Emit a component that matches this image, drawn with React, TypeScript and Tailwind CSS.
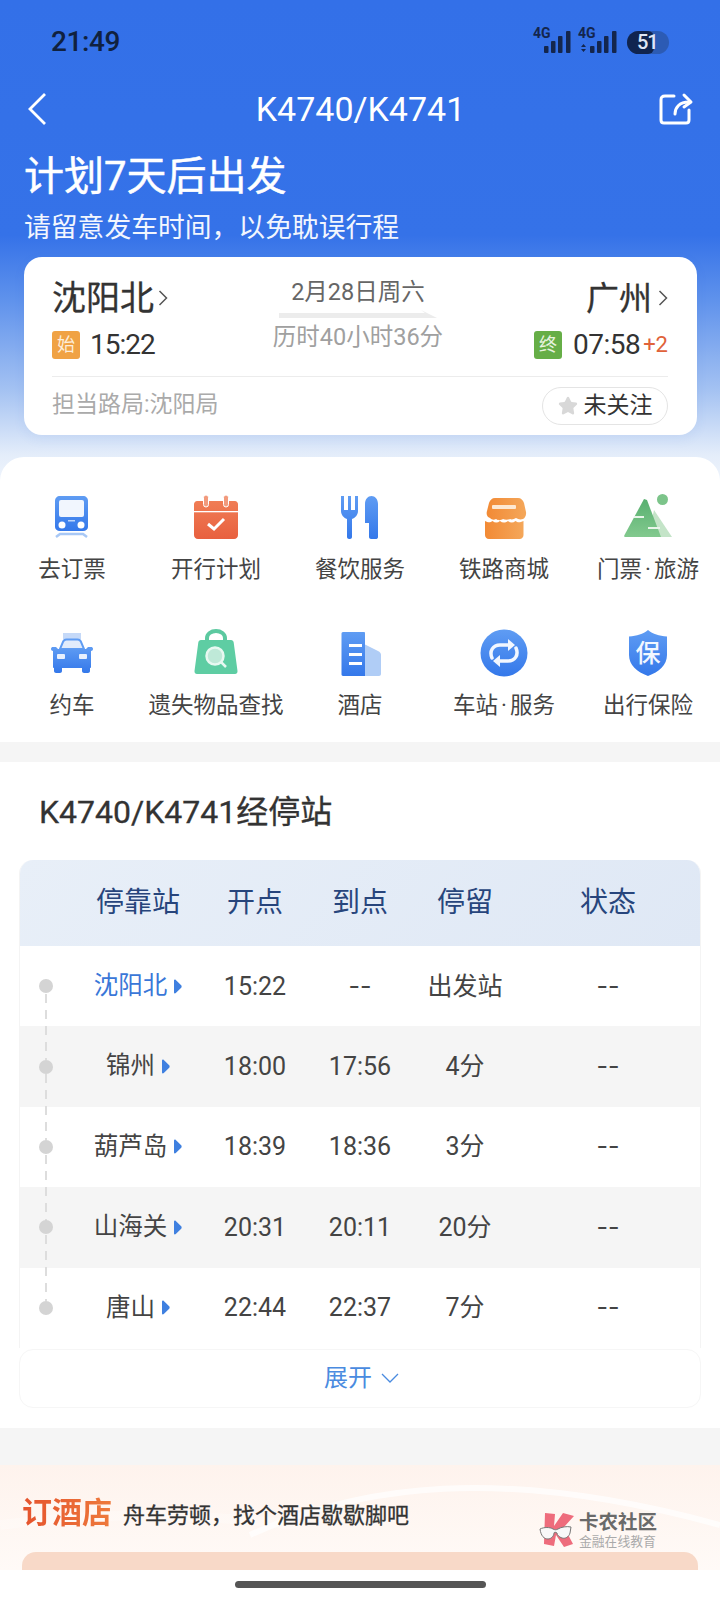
import { Star } from "lucide-react";

type Stop = { name: string; dep: string; arr: string; stay: string; active?: boolean };

const stops: Stop[] = [
  { name: "沈阳北", dep: "15:22", arr: "--", stay: "出发站", active: true },
  { name: "锦州", dep: "18:00", arr: "17:56", stay: "4分" },
  { name: "葫芦岛", dep: "18:39", arr: "18:36", stay: "3分" },
  { name: "山海关", dep: "20:31", arr: "20:11", stay: "20分" },
  { name: "唐山", dep: "22:44", arr: "22:37", stay: "7分" },
];

function Defs() {
  return (
    <svg width="0" height="0" className="absolute">
      <defs>
        <linearGradient id="blueG" x1="0" y1="0" x2="0" y2="1">
          <stop offset="0" stopColor="#5f9cf3" />
          <stop offset="1" stopColor="#3478ea" />
        </linearGradient>
        <linearGradient id="redG" x1="0" y1="0" x2="0" y2="1">
          <stop offset="0" stopColor="#f07d55" />
          <stop offset="1" stopColor="#e8603f" />
        </linearGradient>
        <linearGradient id="orangeG" x1="0" y1="0" x2="1" y2="0">
          <stop offset="0" stopColor="#f28a35" />
          <stop offset="1" stopColor="#f4a75a" />
        </linearGradient>
        <linearGradient id="greenG" x1="0" y1="0" x2="0" y2="1">
          <stop offset="0" stopColor="#58b070" />
          <stop offset="1" stopColor="#82c98e" />
        </linearGradient>
      </defs>
    </svg>
  );
}

function TrainIcon() {
  return (
    <svg width="48" height="48" viewBox="0 0 48 48">
      <path d="M12 3h23c3 0 5 2 5 5v26c0 2-2 4-5 4H12c-3 0-5-2-5-4V8c0-3 2-5 5-5z" fill="url(#blueG)" />
      <rect x="11" y="7" width="25" height="17" rx="2" fill="#f1f6fe" />
      <circle cx="14" cy="32" r="3.500" fill="#fff" />
      <circle cx="33" cy="32" r="3.500" fill="#fff" />
      <rect x="20" y="27" width="7" height="1.500" fill="#bcd4f9" />
      <path d="M8 44l4-3h23l4 3" fill="none" stroke="#a8c8f6" strokeWidth="2.500" />
    </svg>
  );
}

function CalendarIcon() {
  return (
    <svg width="48" height="48" viewBox="0 0 48 48">
      <path d="M5 8h38c1.500 0 3 1.500 3 3v31c0 2-1.500 4-4 4H6c-2.500 0-4-2-4-4V11c0-1.500 1.500-3 3-3z" fill="url(#redG)" />
      <rect x="2" y="18" width="44" height="1.300" fill="#fff" />
      <rect x="11.500" y="2" width="5" height="12" rx="2.500" fill="#f29a7c" stroke="#fff" strokeWidth="1" />
      <rect x="31.500" y="2" width="5" height="12" rx="2.500" fill="#f29a7c" stroke="#fff" strokeWidth="1" />
      <path d="M16 31l6 5 10-10" fill="none" stroke="#fff" strokeWidth="3" />
    </svg>
  );
}

function FoodIcon() {
  return (
    <svg width="48" height="48" viewBox="0 0 48 48">
      <path d="M5 3h3v14h4V3h3v14h4V3h3v15c0 4-3 7-6 8v18c0 1-1 2-2 2h-1c-1 0-2-1-2-2V26c-3-1-6-4-6-8z" fill="url(#blueG)" />
      <path d="M29 11c0-5 3-8 6.500-8S42 6 42 11v33c0 1.500-1 2-2.500 2H35c-1 0-2-1-2-2V30h-4z" fill="url(#blueG)" />
    </svg>
  );
}

function StoreIcon() {
  return (
    <svg width="48" height="48" viewBox="0 0 48 48">
      <path d="M10 5h28c3 0 5 2 6 5l2 9c.500 3-1 6-3 7-3 1-5 0-7-1-2 1-4 2-6 1-2 1-5 1-7 0-2 1-4 2-7 0-2 1-4 1-6-1-3-1-4-4-3-7l2-8c1-3 3-5 6-5z" fill="url(#orangeG)" />
      <path d="M5 28c3 1.500 5 2 7.500 0 2.500 2 5 2 7.500 0 2.500 2 5 2 8 0 2.500 2 5 2 7.500 0 2.500 2 4.500 1.500 8 0v14c0 2-1.500 4-4 4H9c-2.500 0-4-2-4-4z" fill="url(#orangeG)" />
      <rect x="12" y="12" width="24" height="4" rx="1" fill="#fde8d2" />
    </svg>
  );
}

function MountainIcon() {
  return (
    <svg width="48" height="48" viewBox="0 0 48 48">
      <circle cx="38.500" cy="6.500" r="5.500" fill="#7cc48a" />
      <path d="M30 17l18 27H24z" fill="#c4e4c8" />
      <path d="M20 6l3 1 14 37H1c-1 0-1-1-.500-2z" fill="url(#greenG)" />
      <rect x="10" y="23" width="10" height="2" fill="#e8f5ea" />
      <rect x="24" y="34" width="12" height="2" fill="#e8f5ea" />
    </svg>
  );
}

function CarIcon() {
  return (
    <svg width="48" height="48" viewBox="0 0 48 48">
      <rect x="15" y="4" width="18" height="6" fill="#c5d9f8" />
      <path d="M12 20l3-7c.500-1.500 2-2.500 3.500-2.500h11c1.500 0 3 1 3.500 2.500l3 7z" fill="#e1ebfb" stroke="#5f9cf3" strokeWidth="2" />
      <path d="M3 20c0-1.500 1-2 2-2h3l2 2h28l2-2h3c1 0 2 .500 2 2 0 1-1 2-2 2v16c0 1-1 1-1 1v3c0 1-1 2-2 2h-4c-1 0-2-1-2-2v-3H14v3c0 1-1 2-2 2H8c-1 0-2-1-2-2v-3s-1 0-1-1V22c-1 0-2-1-2-2z" fill="url(#blueG)" />
      <rect x="9" y="25" width="8" height="5" rx="1" fill="#e8f0fd" />
      <rect x="31" y="25" width="8" height="5" rx="1" fill="#e8f0fd" />
    </svg>
  );
}

function BagIcon() {
  return (
    <svg width="48" height="48" viewBox="0 0 48 48">
      <path d="M15 13V9c0-4 4-7 9-7s9 3 9 7v4" fill="none" stroke="#5cc9a0" strokeWidth="4" />
      <path d="M9 11h30c1.500 0 2.500 1 2.700 2.500L45.500 42c.200 2-1 3-2.500 3H5c-1.500 0-2.700-1-2.500-3l3.800-28.500C6.500 12 7.500 11 9 11z" fill="#5ecda3" />
      <circle cx="23" cy="27" r="8.500" fill="#bfe9d8" stroke="#e8f8f1" strokeWidth="2.500" />
      <path d="M29 33l5 5" stroke="#e8f8f1" strokeWidth="2.500" />
    </svg>
  );
}

function HotelIcon() {
  return (
    <svg width="48" height="48" viewBox="0 0 48 48">
      <path d="M28 15l14 7c2 1 3 2 3 4v19c0 1-1 2-2 2H28z" fill="#b0cdf6" />
      <path d="M7 3h21c.500 0 1 .500 1 1v43H7c-1 0-1.500-1-1.500-1.500V4.500C5.500 4 6 3 7 3z" fill="url(#blueG)" />
      <rect x="13" y="15" width="13" height="3" fill="#fff" />
      <rect x="13" y="24" width="13" height="3" fill="#fff" />
      <rect x="13" y="33" width="13" height="3" fill="#fff" />
    </svg>
  );
}

function LoopIcon() {
  return (
    <svg width="48" height="48" viewBox="0 0 48 48">
      <circle cx="24" cy="24" r="23.500" fill="url(#blueG)" />
      <path d="M12 29c-3-7 1-13 8-13h10" fill="none" stroke="#f2f7ff" strokeWidth="3.500" strokeLinecap="round" />
      <path d="M28 10l7 6-7 6z" fill="#f2f7ff" />
      <path d="M36 19c3 7-1 13-8 13H18" fill="none" stroke="#f2f7ff" strokeWidth="3.500" strokeLinecap="round" />
      <path d="M20 26l-7 6 7 6z" fill="#f2f7ff" />
    </svg>
  );
}

function ShieldIcon() {
  return (
    <div className="relative flex h-[48px] w-[48px] items-center justify-center">
      <svg width="48" height="48" viewBox="0 0 48 48" className="absolute inset-0">
        <path d="M24 1c5 4 11 6 19 6.500V26c0 10-8 17-19 21C13 43 5 36 5 26V7.500C13 7 19 5 24 1z" fill="url(#blueG)" />
      </svg>
      <span className="relative text-[25px] font-medium leading-none text-[#f2f7ff]">保</span>
    </div>
  );
}

const services = [
  { label: "去订票", icon: <TrainIcon /> },
  { label: "开行计划", icon: <CalendarIcon /> },
  { label: "餐饮服务", icon: <FoodIcon /> },
  { label: "铁路商城", icon: <StoreIcon /> },
  { label: "门票·旅游", icon: <MountainIcon /> },
  { label: "约车", icon: <CarIcon /> },
  { label: "遗失物品查找", icon: <BagIcon /> },
  { label: "酒店", icon: <HotelIcon /> },
  { label: "车站·服务", icon: <LoopIcon /> },
  { label: "出行保险", icon: <ShieldIcon /> },
];

function Signal({ second }: { second?: boolean }) {
  const left = second ? 1 : 0;
  return (
    <div className="relative h-[24px] w-[40px]">
      <span className="absolute left-0 top-[-4px] text-[14px] font-bold leading-[14px] text-[#14264d]">4G</span>
      <svg width="40" height="24" viewBox="0 0 40 24" className="absolute inset-0">
        {second && <path d="M3 17l2.500-3 2.500 3zM3 19l2.500 3 2.500-3z" fill="#14264d" />}
        <rect x={11 + left} y="16" width="4.500" height="7" rx="1" fill="#14264d" />
        <rect x={18 + left} y="11" width="4.500" height="12" rx="1" fill="#14264d" />
        <rect x={25 + left} y="6" width="4.500" height="17" rx="1" fill="#14264d" />
        <rect x={33 + left} y="1" width="4.500" height="22" rx="1" fill="#14264d" />
      </svg>
    </div>
  );
}

function StationArrow() {
  return (
    <svg width="9" height="15" viewBox="0 0 9 15">
      <path d="M1 1.500c0-1 1-1.200 1.800-.600l5.400 5.300c.600.700.600 1.900 0 2.600l-5.400 5.300c-.800.600-1.800.400-1.800-.600z" fill="#3f80e0" />
    </svg>
  );
}

function SmallChevron() {
  return (
    <svg width="10" height="18" viewBox="0 0 10 18" fill="none" stroke="#555555" strokeWidth="1.500">
      <path d="M1.500 2l7 7-7 7" />
    </svg>
  );
}

function KLogo() {
  return (
    <svg width="37" height="36" viewBox="0 0 37 36">
      <path d="M6 1l10 1-1 12L24 1l11 3-10 11 9 17-9 3-8-12-2 11-10-2z" fill="#ee6c7c" />
      <path d="M1 17c4-2 10-2 13 0 2 1 3 1 5 0 3-2 9-3 13-2l-1 6c-1 4-5 6-8 5-3-1-5-3-5-5-1-1-3-1-3 0 0 3-3 6-6 6-4 0-7-3-8-10z" fill="#f8f8f8" stroke="#777777" strokeWidth="1" />
    </svg>
  );
}

export default function App() {
  return (
    <div className="relative h-[1600px] w-[720px] overflow-hidden bg-white font-['Roboto','Noto_Sans_CJK_SC',sans-serif]">
      <Defs />
      <div className="bg-[linear-gradient(180deg,#3370e8_0px,#3572e8_235px,#5f92ec_300px,#a4c2f2_390px,#e4edfa_455px,#ffffff_520px)]">
        {/* status bar */}
        <div className="flex h-[84px] items-center justify-between pl-[51px] pr-[51px]">
          <span className="text-[28px] font-medium tracking-[-0.4px] text-[#10213f]">21:49</span>
          <div className="flex items-center gap-[9px]">
            <div className="flex items-center gap-[5px]">
              <Signal />
              <Signal second />
            </div>
            <div className="relative h-[23px] w-[42px] overflow-hidden rounded-full bg-[#2c5bb4]">
              <div className="h-full w-[27px] rounded-[6px] bg-[#10244f]" />
              <span className="absolute left-[10px] top-0 text-[20px] font-medium leading-[23px] tracking-[-1px] text-[#dfe7f5]">51</span>
            </div>
          </div>
        </div>

        {/* nav */}
        <div className="grid h-[50px] grid-cols-[1fr_auto_1fr] items-center pl-[27px] pr-[26px]">
          <svg width="20" height="34" viewBox="0 0 20 34" fill="none" stroke="#fff" strokeWidth="2.800">
            <path d="M18 2L3 17l15 15" />
          </svg>
          <span className="text-[34px] leading-none text-white">K4740/K4741</span>
          <svg width="36" height="34" viewBox="0 0 36 34" fill="none" stroke="#fff" strokeWidth="3" strokeLinecap="round" strokeLinejoin="round" className="justify-self-end">
            <path d="M16 4H7C4 4 3 5 3 8v20c0 2 1 3 3 3h22c2 0 3-1 3-3V18" />
            <path d="M17 22c0-6 4-12 14-12" />
            <path d="M26 3l7 7-7 5" />
          </svg>
        </div>

        <div className="mt-[20px] h-[46px] pl-[24px] text-[40px] leading-[46px] text-white [-webkit-text-stroke:0.5px_#ffffff]">计划7天后出发</div>
        <div className="mt-[10px] h-[36px] pl-[24px] text-[26.800px] leading-[36px] text-[#f2f6fe]">请留意发车时间，以免耽误行程</div>

        {/* route card */}
        <div className="mx-[24px] mt-[11px] h-[178px] w-[673px] rounded-[18px] bg-white pl-[28px] pr-[29px] shadow-[0_4px_12px_rgba(60,110,200,0.08)]">
          <div className="flex h-[120px] justify-between border-b border-[#ececec]">
            <div>
              <div className="mt-[20px] flex h-[42px] items-center gap-[4px]">
                <span className="text-[34px] leading-none text-[#333333] [-webkit-text-stroke:0.3px_#333333]">沈阳北</span>
                <SmallChevron />
              </div>
              <div className="mt-[12px] flex items-center gap-[10px]">
                <span className="flex h-[28px] w-[28px] items-center justify-center rounded-[3px] bg-[#f0a244] text-[18px] leading-none text-[#fdeeda]">始</span>
                <span className="text-[28px] leading-none tracking-[-1px] text-[#333333]">15:22</span>
              </div>
            </div>
            <div className="ml-[14px] flex w-[172px] flex-col items-center">
              <span className="mt-[20px] text-[23.500px] leading-[30px] text-[#666666]">2月28日周六</span>
              <svg width="158" height="8" viewBox="0 0 158 8" className="mt-[3px]">
                <path d="M0 3h146l-4-3 16 8H0z" fill="#ececec" />
              </svg>
              <span className="mt-[4px] text-[23.500px] leading-[30px] text-[#a0a0a0]">历时40小时36分</span>
            </div>
            <div className="flex flex-col items-end">
              <div className="mt-[20px] flex h-[42px] items-center gap-[6px]">
                <span className="text-[33px] leading-none text-[#333333] [-webkit-text-stroke:0.3px_#333333]">广州</span>
                <SmallChevron />
              </div>
              <div className="mt-[12px] flex items-center">
                <span className="flex h-[28px] w-[28px] items-center justify-center rounded-[3px] bg-[#66ae47] text-[18px] leading-none text-[#e6f3df]">终</span>
                <span className="ml-[11px] text-[28px] leading-none tracking-[-0.5px] text-[#333333]">07:58</span>
                <span className="ml-[3px] text-[22px] leading-none text-[#e0623a]">+2</span>
              </div>
            </div>
          </div>
          <div className="flex h-[57px] items-center justify-between">
            <span className="text-[23px] text-[#aaaaaa]">担当路局:沈阳局</span>
            <div className="flex h-[38px] w-[126px] items-center justify-center gap-[6px] rounded-full border border-[#e4e4e4]">
              <Star className="h-[20px] w-[20px] fill-[#d8d8d8] text-[#d8d8d8]" />
              <span className="text-[23px] leading-none text-[#333333]">未关注</span>
            </div>
          </div>
        </div>

        {/* services */}
        <div className="mt-[22px] grid grid-cols-5 gap-y-[45px] rounded-t-[24px] bg-white pb-[22px] pt-[36px]">
          {services.map((s) => {
            const [a, b] = s.label.split("·");
            return (
              <div key={s.label} className="flex flex-col items-center">
                <div className="flex h-[48px] w-[48px] items-center justify-center">{s.icon}</div>
                <span className="mt-[13px] whitespace-nowrap text-[22.500px] leading-[30px] text-[#444444]">
                  {a}
                  {b && <span className="mx-[3px]">·</span>}
                  {b}
                </span>
              </div>
            );
          })}
        </div>
      </div>

      <div className="h-[20px] bg-[#f5f5f5]" />

      {/* stops */}
      <div className="bg-white pb-[20px] pl-[19px] pr-[19px] pt-[30px]">
        <div className="h-[40px] pl-[20px] text-[32px] leading-[40px] text-[#333333] [-webkit-text-stroke:0.3px_#333333]">K4740/K4741经停站</div>
        <div className="mt-[28px] overflow-hidden rounded-t-[14px] border-x border-[#f4f4f4]">
          <div className="grid h-[86px] grid-cols-[52px_132px_102px_108px_102px_184px] items-center bg-[linear-gradient(135deg,#e8eff8,#dfe8f5)] text-center text-[28px] leading-none text-[#27457c]">
            <span />
            <span>停靠站</span>
            <span>开点</span>
            <span>到点</span>
            <span>停留</span>
            <span>状态</span>
          </div>
          {stops.map((s, i) => (
            <div
              key={s.name}
              className={`grid h-[80.400px] grid-cols-[52px_132px_102px_108px_102px_184px] items-center text-center text-[25px] leading-none text-[#444444] ${i % 2 === 1 ? "bg-[#f5f5f5]" : "bg-white"}`}
            >
              <div className="relative flex h-full items-center justify-center">
                <span className="h-[14px] w-[14px] rounded-full bg-[#d4d4d4]" />
                {i < stops.length - 1 && (
                  <span className="absolute left-[25px] top-[48px] h-[66px] w-[1.500px] bg-[repeating-linear-gradient(180deg,#dddddd_0px,#dddddd_9px,transparent_9px,transparent_16px)]" />
                )}
              </div>
              <div className="flex items-center justify-center gap-[6px]">
                <span className={`text-[24.500px] ${s.active ? "text-[#3a77d8]" : "text-[#444444]"}`}>{s.name}</span>
                <StationArrow />
              </div>
              <span>{s.dep}</span>
              <span className={s.arr === "--" ? "font-['Inter',sans-serif]" : ""}>{s.arr}</span>
              <span>{s.stay}</span>
              <span className="font-['Inter',sans-serif]">--</span>
            </div>
          ))}
        </div>
        <div className="mt-[1px] flex h-[59px] items-center justify-center gap-[9px] rounded-[14px] border border-[#f6f6f6] pl-[3px] text-[24px] text-[#4a8be0]">
          <span>展开</span>
          <svg width="18" height="11" viewBox="0 0 18 11" fill="none" stroke="#4a8be0" strokeWidth="1.300">
            <path d="M1 1l8 8 8-8" />
          </svg>
        </div>
      </div>

      <div className="h-[37px] bg-[#f5f5f5]" />

      {/* hotel */}
      <div className="relative h-[105px] overflow-hidden bg-[linear-gradient(180deg,#fef3ed,#fffaf7)] pl-[22px] pr-[22px] pt-[28px]">
        <svg width="720" height="105" viewBox="0 0 720 105" className="absolute left-0 top-0">
          <path d="M250 70C360 20 500 0 720 60" fill="none" stroke="#ffffff" strokeWidth="6" opacity="0.7" />
          <path d="M0 60C120 45 200 50 300 60" fill="none" stroke="#ffffff" strokeWidth="10" opacity="0.25" />
        </svg>
        <div className="relative flex h-[40px] items-center">
          <span className="bg-[linear-gradient(90deg,#e5532d,#ee7a3c)] bg-clip-text text-[30px] font-bold leading-[40px] text-transparent">订酒店</span>
          <span className="ml-[11px] mt-[6px] text-[22px] leading-none text-[#333333] [-webkit-text-stroke:0.3px_#333333]">舟车劳顿，找个酒店歇歇脚吧</span>
        </div>
        <div className="relative mt-[19px] h-[30px] rounded-t-[14px] bg-[#f8d9c8]" />
      </div>

      {/* watermark */}
      <div className="absolute left-[539px] top-[1512px] flex items-start gap-[3px]">
        <KLogo />
        <div className="flex flex-col">
          <span className="text-[19.500px] font-bold leading-[22px] text-[#6a6a6a]">卡农社区</span>
          <span className="mt-[1px] text-[12.800px] leading-[14px] text-[#aaaaaa]">金融在线教育</span>
        </div>
      </div>

      {/* home bar */}
      <div className="absolute bottom-0 left-0 flex h-[30px] w-full items-start justify-center bg-white pt-[11px]">
        <div className="h-[7px] w-[251px] rounded-full bg-[#555555]" />
      </div>
    </div>
  );
}
